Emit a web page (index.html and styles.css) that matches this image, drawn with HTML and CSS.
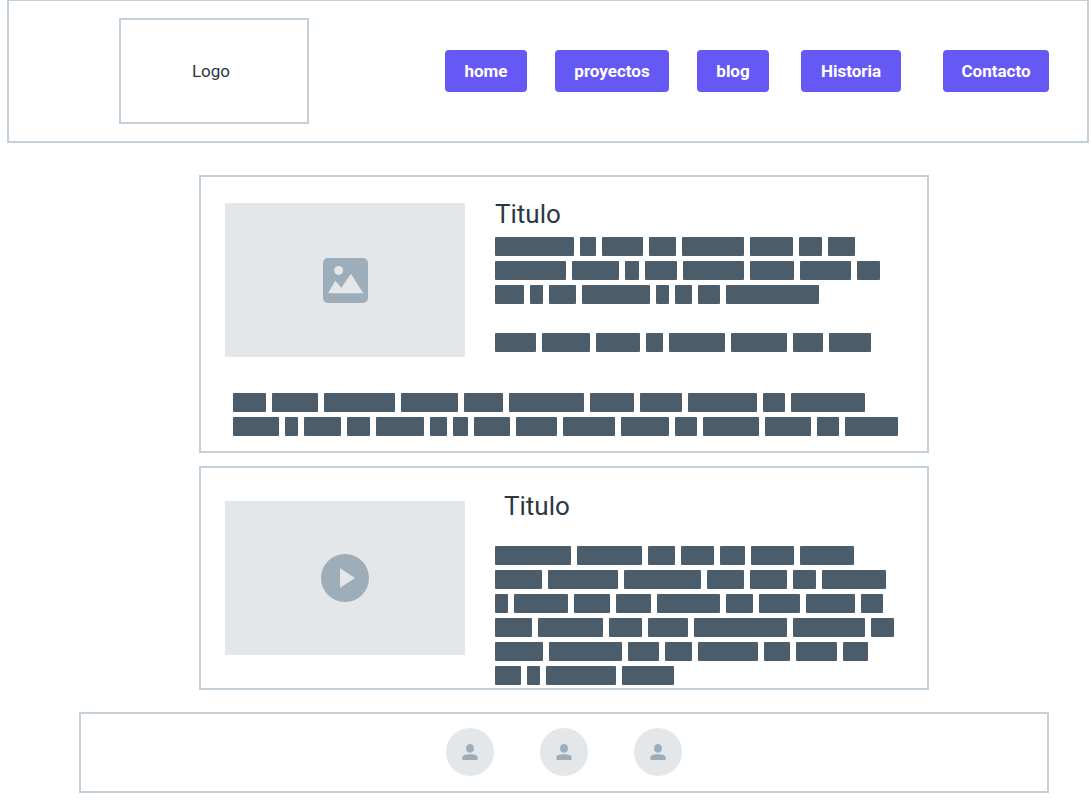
FILE: index.html
```html
<!DOCTYPE html>
<html lang="es">
<head>
<meta charset="utf-8">
<meta name="viewport" content="width=device-width, initial-scale=1">
<title>Logo</title>
<link rel="stylesheet" href="styles.css">
</head>
<body>
<header class="header">
  <div class="logo">Logo</div>
  <nav class="nav">
    <button class="btn btn-home" type="button">home</button>
    <button class="btn btn-projects" type="button">proyectos</button>
    <button class="btn btn-blog" type="button">blog</button>
    <button class="btn btn-history" type="button">Historia</button>
    <button class="btn btn-contact" type="button">Contacto</button>
  </nav>
</header>

<div class="page">
  <main class="posts">
    <article class="card">
      <div class="row">
        <div class="media">
          <svg width="45" height="45" viewBox="0 0 45 45" aria-hidden="true">
            <rect class="ink" width="45" height="45" rx="5"/>
            <circle class="paper" cx="15.7" cy="12.4" r="4.5"/>
            <path class="paper" d="M5 35.3 12.3 22.7 18.3 29.8 28 15.8 40.3 35.3z"/>
          </svg>
        </div>
        <div class="body">
          <h2 class="title">Titulo</h2>
          <div class="text" data-lines="79 16 41 27 62 43 23 27|71 47 14 32 61 44 51 23|29 13 27 68 13 17 22 93||41 48 44 17 56 56 30 42"></div>
        </div>
      </div>
      <div class="text text-wide" data-lines="33 46 71 57 39 75 44 42 69 22 74|46 13 37 23 48 17 15 36 41 52 48 22 56 46 22 53"></div>
    </article>

    <article class="card card-video">
      <div class="row">
        <div class="media">
          <svg width="48" height="48" viewBox="0 0 48 48" aria-hidden="true">
            <circle class="ink" cx="24" cy="24" r="24"/>
            <path class="paper" d="M19 14.2 34 24.1 19 33.7z" stroke-linejoin="round"/>
          </svg>
        </div>
        <div class="body">
          <h2 class="title">Titulo</h2>
          <div class="text" data-lines="76 65 27 33 25 43 54|47 70 77 37 37 23 64|13 54 36 35 63 27 41 49 22|37 65 33 40 93 72 23|48 73 31 27 60 26 41 25|26 13 70 52"></div>
        </div>
      </div>
    </article>
  </main>

  <footer class="footer">
    <span class="avatar"><svg width="16" height="16" viewBox="0 0 16 16" aria-hidden="true"><ellipse class="ink" cx="8" cy="4.4" rx="4" ry="4.4"/><path class="ink" d="M.4 16v-2.6C.4 11 3 10.2 8 10.2s7.600.8 7.600 3.200V16z"/></svg></span>
    <span class="avatar"><svg width="16" height="16" viewBox="0 0 16 16" aria-hidden="true"><ellipse class="ink" cx="8" cy="4.4" rx="4" ry="4.4"/><path class="ink" d="M.4 16v-2.6C.4 11 3 10.2 8 10.2s7.600.8 7.600 3.200V16z"/></svg></span>
    <span class="avatar"><svg width="16" height="16" viewBox="0 0 16 16" aria-hidden="true"><ellipse class="ink" cx="8" cy="4.4" rx="4" ry="4.4"/><path class="ink" d="M.4 16v-2.6C.4 11 3 10.2 8 10.2s7.600.8 7.600 3.200V16z"/></svg></span>
  </footer>
</div>
<script src="script.js"></script>
</body>
</html>
```

FILE: styles.css
```css
* {
  box-sizing: border-box;
}

body {
  margin: 0;
  background: #fff;
  color: #293845;
  font-family: Roboto, "Liberation Sans", sans-serif;
}

.header {
  display: flex;
  align-items: center;
  justify-content: space-between;
  margin: 0 3px 0 7px;
  padding: 17px 38px 17px 110px;
  border: 2px solid #c3cfd9;
  border-top-width: 1px;
}

.logo {
  display: flex;
  align-items: center;
  justify-content: center;
  width: 190px;
  height: 106px;
  padding-right: 6px;
  border: 2px solid #c3cfd9;
  font-size: 17px;
}

.nav {
  display: flex;
}

.btn {
  height: 42px;
  padding: 0;
  border: 0;
  border-radius: 4px;
  background: #6558f5;
  color: #fff;
  font-family: inherit;
  font-size: 17px;
  font-weight: 700;
  cursor: pointer;
}

.btn-home { width: 82px; }
.btn-projects { width: 114px; margin-left: 28px; }
.btn-blog { width: 72px; margin-left: 28px; }
.btn-history { width: 100px; margin-left: 32px; }
.btn-contact { width: 106px; margin-left: 42px; }

.page {
  padding: 32px 43px 9px 79px;
}

.posts {
  display: grid;
  gap: 13px;
  max-width: 730px;
  margin: 0 auto;
}

.card {
  padding: 22px 24px 15px;
  border: 2px solid #c3cfd9;
}

.card-video {
  padding: 23px 24px 3px;
}

.row {
  display: flex;
  align-items: flex-start;
  gap: 30px;
}

.media {
  display: flex;
  flex: none;
  align-items: center;
  justify-content: center;
  width: 240px;
  height: 154px;
  margin-top: 4px;
  background: #e3e7ea;
}

.card-video .media {
  margin-top: 10px;
}

.ink { fill: #9eadba; }
.paper { fill: #e3e7ea; }

.body {
  flex: 1;
  min-width: 0;
}

.title {
  margin: 0 0 8px;
  font-size: 26px;
  font-weight: 400;
  line-height: 30px;
}

.card-video .title {
  margin: 0 0 25px 9px;
}

.text {
  display: grid;
  gap: 5px;
}

.text-wide {
  margin: 36px 0 0 8px;
}

.line {
  display: flex;
  gap: 6px;
  height: 19px;
}

.word {
  flex: none;
  border-radius: 1px;
  background: #4b5c6b;
}

.footer {
  display: flex;
  justify-content: center;
  gap: 46px;
  margin-top: 22px;
  padding: 14px 0 15px;
  border: 2px solid #c3cfd9;
}

.avatar {
  display: flex;
  align-items: center;
  justify-content: center;
  width: 48px;
  height: 48px;
  border-radius: 50%;
  background: #e3e7ea;
}
```

FILE: script.js
```js
// Builds placeholder text: "|" separates lines, numbers are word widths.
document.querySelectorAll(".text").forEach(function (block) {
  block.dataset.lines.split("|").forEach(function (widths) {
    var line = document.createElement("div");
    line.className = "line";
    widths.split(" ").filter(Boolean).forEach(function (width) {
      var word = document.createElement("span");
      word.className = "word";
      word.style.width = width + "px";
      line.appendChild(word);
    });
    block.appendChild(line);
  });
});
```
